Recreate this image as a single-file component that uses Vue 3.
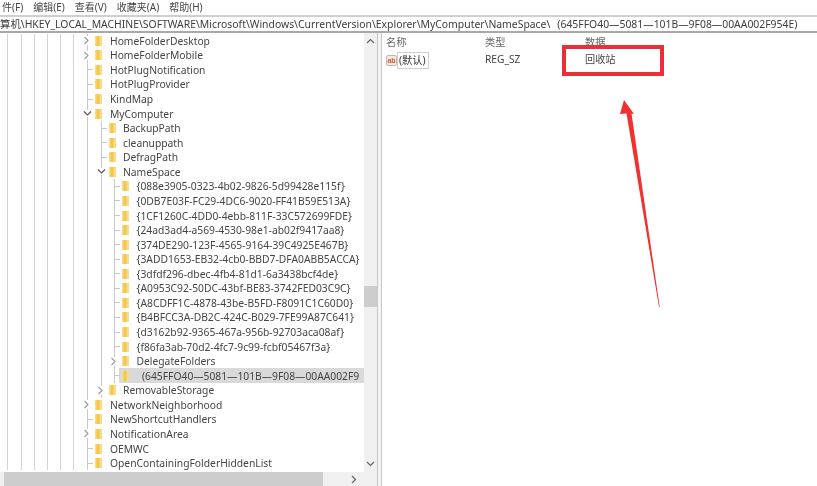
<script setup>
const menus = ['件(F)', '编辑(E)', '查看(V)', '收藏夹(A)', '帮助(H)']

const rows = [
  { t: 'HomeFolderDesktop', l: 0, c: 'r' },
  { t: 'HomeFolderMobile', l: 0, c: 'r' },
  { t: 'HotPlugNotification', l: 0 },
  { t: 'HotPlugProvider', l: 0 },
  { t: 'KindMap', l: 0 },
  { t: 'MyComputer', l: 0, c: 'd' },
  { t: 'BackupPath', l: 1 },
  { t: 'cleanuppath', l: 1 },
  { t: 'DefragPath', l: 1 },
  { t: 'NameSpace', l: 1, c: 'd' },
  { t: '{088e3905-0323-4b02-9826-5d99428e115f}', l: 2 },
  { t: '{0DB7E03F-FC29-4DC6-9020-FF41B59E513A}', l: 2 },
  { t: '{1CF1260C-4DD0-4ebb-811F-33C572699FDE}', l: 2 },
  { t: '{24ad3ad4-a569-4530-98e1-ab02f9417aa8}', l: 2 },
  { t: '{374DE290-123F-4565-9164-39C4925E467B}', l: 2 },
  { t: '{3ADD1653-EB32-4cb0-BBD7-DFA0ABB5ACCA}', l: 2 },
  { t: '{3dfdf296-dbec-4fb4-81d1-6a3438bcf4de}', l: 2 },
  { t: '{A0953C92-50DC-43bf-BE83-3742FED03C9C}', l: 2 },
  { t: '{A8CDFF1C-4878-43be-B5FD-F8091C1C60D0}', l: 2 },
  { t: '{B4BFCC3A-DB2C-424C-B029-7FE99A87C641}', l: 2 },
  { t: '{d3162b92-9365-467a-956b-92703aca08af}', l: 2 },
  { t: '{f86fa3ab-70d2-4fc7-9c99-fcbf05467f3a}', l: 2 },
  { t: 'DelegateFolders', l: 2, c: 'r' },
  { t: '(645FFO40—5081—101B—9F08—00AA002F9', l: 2, sel: true },
  { t: 'RemovableStorage', l: 1, c: 'r' },
  { t: 'NetworkNeighborhood', l: 0, c: 'r' },
  { t: 'NewShortcutHandlers', l: 0 },
  { t: 'NotificationArea', l: 0, c: 'r' },
  { t: 'OEMWC', l: 0 },
  { t: 'OpenContainingFolderHiddenList', l: 0 },
]
</script>

<template>
  <div class="window">
    <nav class="menubar">
      <span v-for="m in menus" :key="m" class="menu">{{ m }}</span>
    </nav>
    <div class="address">
      <span class="path">算机\HKEY_LOCAL_MACHINE\SOFTWARE\Microsoft\Windows\CurrentVersion\Explorer\MyComputer\NameSpace\</span><span class="guid">(645FFO40—5081—101B—9F08—00AA002F954E)</span>
    </div>
    <div class="panes">
      <section class="left">
        <div class="tree-area">
          <div class="tree">
            <div v-for="r in rows" :key="r.t" class="row" :class="['lv' + r.l, { sel: r.sel }]">
              <span class="twisty">
                <svg v-if="r.c === 'r'" width="7" height="9" viewBox="0 0 7 9"><path d="M1.5 1 L5 4.5 L1.5 8" fill="none" stroke="#9a9a9a" stroke-width="1.1"/></svg>
                <svg v-else-if="r.c === 'd'" width="9" height="7" viewBox="0 0 9 7"><path d="M1 1.5 L4.5 5 L8 1.5" fill="none" stroke="#555" stroke-width="1.2"/></svg>
                <i v-else class="hline"></i>
              </span>
              <svg class="folder" width="7" height="10" viewBox="0 0 7 10">
                <rect x="0" y="0" width="7" height="10" fill="#fbdc85"/>
                <rect x="1.5" y="0" width="3" height="10" fill="#f3c650"/>
              </svg>
              <span class="label">{{ r.t }}</span>
            </div>
          </div>
          <div class="vscroll">
            <svg width="9" height="6" viewBox="0 0 9 6"><path d="M1 5 L4.5 1.5 L8 5" fill="none" stroke="#666" stroke-width="1.2"/></svg>
            <div class="vtrack"><div class="vthumb"></div></div>
            <svg width="9" height="6" viewBox="0 0 9 6"><path d="M1 1 L4.5 4.5 L8 1" fill="none" stroke="#666" stroke-width="1.2"/></svg>
          </div>
        </div>
        <div class="hscroll">
          <div class="hthumb"></div>
          <svg width="6" height="9" viewBox="0 0 6 9"><path d="M1 1 L4.5 4.5 L1 8" fill="none" stroke="#666" stroke-width="1.2"/></svg>
        </div>
      </section>
      <div class="splitter"></div>
      <section class="right">
        <div class="head">
          <span class="c1">名称</span><span class="c2">类型</span><span class="c3">数据</span>
        </div>
        <div class="value">
          <span class="c1 namecell">
            <svg class="ab" width="11" height="11" viewBox="0 0 11 11">
              <rect x="0.5" y="0.5" width="10" height="10" rx="1.5" fill="#f4ede6" stroke="#c9b8a8"/>
              <text x="5.5" y="7.6" text-anchor="middle" font-size="7" font-weight="700" fill="#d9532c" font-family="Liberation Sans, sans-serif">ab</text>
            </svg>
            <span class="default">(默认)</span>
          </span>
          <span class="c2">REG_SZ</span>
          <span class="c3 boxed">回收站</span>
        </div>
        <svg class="arrow" width="60" height="220" viewBox="0 0 60 220">
          <path d="M13 5 L23 19 L20.5 18.5 L48.7 212 L48 212 L15.5 18.5 L9 19 Z" fill="#f2302f"/>
        </svg>
      </section>
    </div>
  </div>
</template>

<style scoped>
.window {
  width: 817px;
  height: 486px;
  overflow: hidden;
  background: #fff;
  color: #454545;
  font-family: "Noto Sans", "Noto Sans CJK SC", sans-serif;
  font-size: 10.3px;
  filter: blur(0.45px);
  display: flex;
  flex-direction: column;
}
.menubar {
  height: 15px;
  display: flex;
  gap: 10px;
  padding-left: 2px;
  font-size: 10px;
  line-height: 15px;
  white-space: nowrap;
  flex: none;
}
.address {
  height: 18px;
  box-sizing: border-box;
  border-top: 2px solid #cfcfcf;
  border-bottom: 2px solid #a9a9a9;
  font-size: 10.4px;
  line-height: 14px;
  white-space: nowrap;
  overflow: hidden;
  flex: none;
  color: #3c3c3c;
}
.guid { margin-left: 7px; }
.panes {
  flex: 1;
  display: flex;
  min-height: 0;
}
.left {
  width: 377px;
  flex: none;
  display: flex;
  flex-direction: column;
}
.tree-area {
  flex: 1;
  display: flex;
  min-height: 0;
}
.tree {
  flex: 1;
  padding-top: 0.5px;
  overflow: hidden;
}
.row {
  --g: #d2d2d2;
  --t: #c9c9c9;
  --guides:
    linear-gradient(var(--g), var(--g)) 7px 0 / 1px 100% no-repeat,
    linear-gradient(var(--g), var(--g)) 21px 0 / 1px 100% no-repeat,
    linear-gradient(var(--g), var(--g)) 34px 0 / 1px 100% no-repeat,
    linear-gradient(var(--g), var(--g)) 47px 0 / 1px 100% no-repeat,
    linear-gradient(var(--g), var(--g)) 60px 0 / 1px 100% no-repeat,
    linear-gradient(var(--g), var(--g)) 73px 0 / 1px 100% no-repeat,
    linear-gradient(var(--t), var(--t)) 87px 0 / 1px 100% no-repeat;
  --l1: linear-gradient(var(--t), var(--t)) 101px 0 / 1px 100% no-repeat;
  --l2: linear-gradient(var(--t), var(--t)) 114px 0 / 1px 100% no-repeat;
  height: 14.57px;
  display: flex;
  align-items: center;
  white-space: nowrap;
  background: var(--guides);
}
.lv1 { background: var(--l1), var(--guides); padding-left: 97px; }
.lv2 { background: var(--l2), var(--l1), var(--guides); padding-left: 110px; }
.lv0 { padding-left: 83px; }
.sel {
  background:
    var(--l2),
    linear-gradient(#d9d9d9, #d9d9d9) 119px 0 / 245px 100% no-repeat,
    var(--l1),
    var(--guides);
}
.twisty {
  width: 12px;
  display: flex;
  align-items: center;
  flex: none;
}
.twisty svg { background: #fff; }
.hline {
  width: 6px;
  height: 1px;
  background: #c8c8c8;
  margin-left: 4px;
}
.folder { flex: none; }
.label { margin-left: 8px; }
.lv1 .label { margin-left: 7px; }
.lv2 .label { margin-left: 7.5px; }
.lv2.sel .label { margin-left: 13px; }
.vscroll {
  width: 13px;
  flex: none;
  background: #f0f0f0;
  display: flex;
  flex-direction: column;
  align-items: center;
  padding: 5px 0;
  gap: 4px;
}
.vtrack { flex: 1; width: 100%; padding-top: 238px; }
.vthumb { height: 21px; background: #cdcdcd; }
.hscroll {
  height: 14px;
  flex: none;
  background: #f0f0f0;
  display: flex;
  align-items: center;
  padding-left: 4px;
  padding-right: 20px;
  gap: 28px;
}
.hthumb { width: 319px; height: 100%; background: #cdcdcd; }
.splitter {
  width: 5px;
  flex: none;
  box-sizing: border-box;
  border-left: 1px solid #c8c8c8;
  border-right: 1px solid #c8c8c8;
  background: #f4f4f4;
}
.right {
  flex: 1;
  position: relative;
  padding-left: 4px;
  font-size: 10.2px;
}
.head, .value {
  display: flex;
  white-space: nowrap;
  line-height: 15px;
}
.head { padding-top: 2px; color: #666; }
.c1 { width: 99px; flex: none; }
.c2 { width: 100px; flex: none; }
.c3 { flex: none; }
.value { margin-top: 2px; }
.namecell { display: flex; align-items: center; }
.ab { flex: none; }
.default {
  border: 1px solid #cfcfcf;
  padding: 0 2px 0 1px;
  line-height: 15px;
  color: #333;
}
.boxed { position: relative; color: #444; }
.boxed::before {
  content: "";
  position: absolute;
  left: -23px;
  top: -7px;
  width: 102px;
  height: 31px;
  box-sizing: border-box;
  border: 4px solid #ea2f37;
}
.arrow {
  position: absolute;
  left: 229px;
  top: 62px;
}
</style>
